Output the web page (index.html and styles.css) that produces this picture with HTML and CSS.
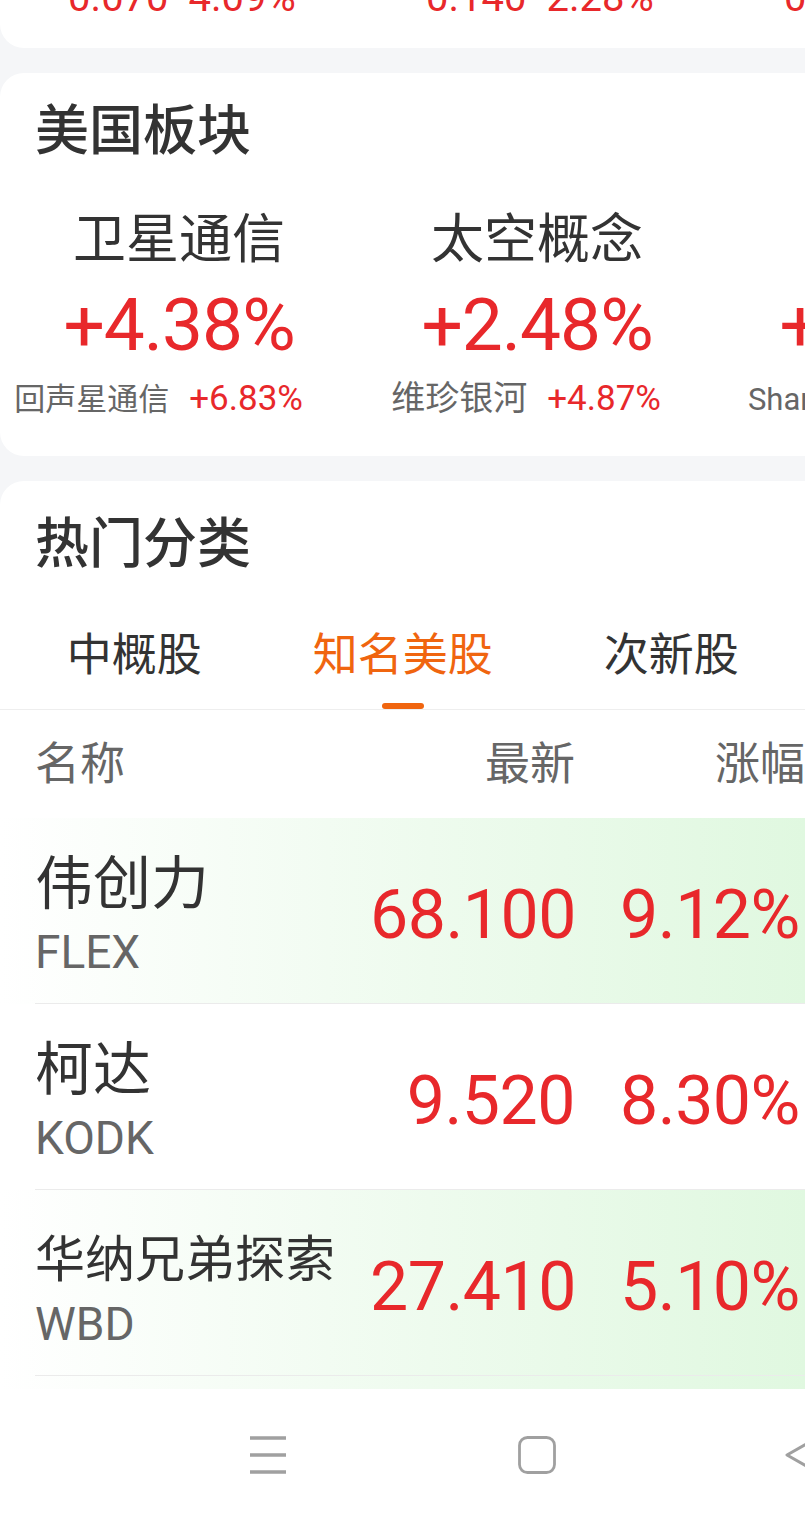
FILE: index.html
```html
<!DOCTYPE html>
<html lang="zh-CN">
<head>
    <meta charset="UTF-8">
    <meta name="viewport" content="width=device-width, initial-scale=1.0">
    <title>美股行情</title>
    <link rel="stylesheet" href="styles.css">
</head>
<body>
<div class="screen">
    <div class="scroll">
        <!-- index card, scrolled mostly out of view -->
        <section class="card top-card">
            <div class="quote-row">
                <div class="quote"><span>0.070</span><span>4.09%</span></div>
                <div class="quote"><span>0.140</span><span>2.28%</span></div>
                <div class="quote"><span>0.210</span><span>1.15%</span></div>
            </div>
        </section>

        <section class="card sector-card">
            <h2 class="card-title">美国板块</h2>
            <div class="sectors">
                <div class="sector">
                    <div class="sector-name">卫星通信</div>
                    <div class="sector-pct">+4.38%</div>
                    <div class="sector-lead"><span class="lead-name">回声星通信</span><span class="lead-pct">+6.83%</span></div>
                </div>
                <div class="sector">
                    <div class="sector-name">太空概念</div>
                    <div class="sector-pct">+2.48%</div>
                    <div class="sector-lead"><span class="lead-name short">维珍银河</span><span class="lead-pct">+4.87%</span></div>
                </div>
                <div class="sector">
                    <div class="sector-name">区块链</div>
                    <div class="sector-pct">+2.16%</div>
                    <div class="sector-lead"><span class="lead-name">SharpLink</span><span class="lead-pct">+9.02%</span></div>
                </div>
            </div>
        </section>

        <section class="card hot-card">
            <h2 class="card-title">热门分类</h2>
            <div class="tabs">
                <div class="tab">中概股<i class="tab-bar"></i></div>
                <div class="tab active">知名美股<i class="tab-bar"></i></div>
                <div class="tab">次新股<i class="tab-bar"></i></div>
                <div class="tab">明星股<i class="tab-bar"></i></div>
            </div>
            <div class="list-head">
                <div class="c-name">名称</div>
                <div class="c-price">最新</div>
                <div class="c-change">涨幅</div>
            </div>
            <div class="stock up">
                <div class="stock-body">
                    <div class="c-name">
                        <div class="stock-name">伟创力</div>
                        <div class="stock-code">FLEX</div>
                    </div>
                    <div class="c-price num">68.100</div>
                    <div class="c-change num">9.12%</div>
                </div>
            </div>
            <div class="stock">
                <div class="stock-body">
                    <div class="c-name">
                        <div class="stock-name">柯达</div>
                        <div class="stock-code">KODK</div>
                    </div>
                    <div class="c-price num">9.520</div>
                    <div class="c-change num">8.30%</div>
                </div>
            </div>
            <div class="stock up">
                <div class="stock-body">
                    <div class="c-name">
                        <div class="stock-name long">华纳兄弟探索</div>
                        <div class="stock-code">WBD</div>
                    </div>
                    <div class="c-price num">27.410</div>
                    <div class="c-change num">5.10%</div>
                </div>
            </div>
            <div class="stock up">
                <div class="stock-body">
                    <div class="c-name">
                        <div class="stock-name">美光科技</div>
                        <div class="stock-code">MU</div>
                    </div>
                    <div class="c-price num">98.270</div>
                    <div class="c-change num">4.66%</div>
                </div>
            </div>
        </section>
    </div>

    <nav class="nav-bar">
        <div class="nav-btn">
            <svg width="36" height="38" viewBox="0 0 36 38"><path d="M0 2h36M0 19h36M0 36h36" stroke="#a0a0a0" stroke-width="3.4"/></svg>
        </div>
        <div class="nav-btn">
            <svg width="38" height="38" viewBox="0 0 38 38"><rect x="1.5" y="1.5" width="35" height="35" rx="8" fill="none" stroke="#a0a0a0" stroke-width="2.8"/></svg>
        </div>
        <div class="nav-btn">
            <svg width="40" height="40" viewBox="0 0 40 40"><polyline points="30,4 2,20 30,36" fill="none" stroke="#a0a0a0" stroke-width="3" stroke-linejoin="round"/></svg>
        </div>
    </nav>
</div>
</body>
</html>
```

FILE: styles.css
```css
html, body {
    margin: 0;
    padding: 0;
}
body {
    width: 805px;
    height: 1520px;
    overflow: hidden;
    background: #f5f6f8;
    font-family: Roboto, "Noto Sans CJK SC", sans-serif;
    color: #333;
}
.screen {
    width: 1074px;
    height: 1520px;
    display: flex;
    flex-direction: column;
}
.scroll {
    height: 1389px;
    overflow: hidden;
}
.card {
    background: #fff;
    border-radius: 24px;
}
.card-title {
    margin: 0;
    padding-left: 35px;
    font-size: 54px;
    line-height: 1;
    font-weight: 500;
    color: #333;
}

/* top card */
.top-card {
    height: 48px;
    overflow: hidden;
    border-radius: 0 0 24px 24px;
}
.quote-row {
    display: flex;
    margin-top: -22px;
}
.quote {
    width: 358px;
    flex-shrink: 0;
    box-sizing: border-box;
    padding-left: 6px;
    display: flex;
    justify-content: center;
    gap: 20px;
    font-size: 40px;
    line-height: 1;
    color: #e8282b;
}

/* sectors */
.sector-card {
    margin-top: 25px;
    padding: 32px 0 40px;
}
.sectors {
    display: flex;
    margin-top: 55px;
}
.sector {
    width: 358px;
    flex-shrink: 0;
    display: flex;
    flex-direction: column;
    align-items: center;
}
.sector-name {
    font-size: 53px;
    line-height: 1;
    color: #333;
}
.sector-pct {
    margin-top: 22px;
    font-size: 73px;
    line-height: 1;
    letter-spacing: -1px;
    color: #e8282b;
}
.sector-lead {
    align-self: stretch;
    display: flex;
    justify-content: flex-end;
    align-items: baseline;
    gap: 20px;
    margin-top: 19px;
    padding-right: 55px;
    font-size: 32px;
    line-height: 1;
    white-space: nowrap;
}
.lead-name {
    font-size: 31px;
    color: #666;
}
.lead-name.short {
    font-size: 34px;
}
.lead-pct {
    font-size: 35px;
    color: #e8282b;
}

/* hot categories */
.hot-card {
    margin-top: 25px;
    padding-top: 37px;
    border-bottom-left-radius: 0;
    border-bottom-right-radius: 0;
}
.tabs {
    display: flex;
    margin-top: 61px;
    border-bottom: 1px solid #eeeeee;
}
.tab {
    width: 268.5px;
    flex-shrink: 0;
    display: flex;
    flex-direction: column;
    align-items: center;
    font-size: 45px;
    line-height: 1;
    color: #333;
}
.tab-bar {
    width: 42px;
    height: 6px;
    margin-top: 25px;
    border-radius: 3px;
}
.tab.active {
    color: #f0650f;
}
.tab.active .tab-bar {
    background: #f0650f;
}

.list-head,
.stock-body {
    display: flex;
    align-items: center;
}
.list-head {
    height: 108px;
    padding-left: 35px;
    font-size: 45px;
    line-height: 1;
    color: #666;
}
.c-name {
    width: 335px;
    flex-shrink: 0;
}
.c-price {
    width: 205px;
    flex-shrink: 0;
    text-align: right;
}
.c-change {
    width: 230px;
    flex-shrink: 0;
    box-sizing: border-box;
    padding-left: 45px;
}
.list-head .c-change {
    text-align: right;
}

.stock {
    padding-left: 35px;
}
.stock.up {
    background: linear-gradient(90deg, #ffffff 0%, #eefbee 40%, #d6f6d6 100%);
}
.stock-body {
    height: 186px;
    box-sizing: border-box;
    padding-top: 9px;
    border-bottom: 1px solid #ebebeb;
}
.stock-name {
    font-size: 58px;
    line-height: 1;
    color: #333;
    white-space: nowrap;
}
.stock-name.long {
    font-size: 50px;
    padding-top: 7px;
}
.stock-code {
    margin-top: 16px;
    font-size: 46px;
    line-height: 1;
    color: #666;
}
.num {
    font-size: 68px;
    line-height: 1;
    letter-spacing: -0.5px;
    color: #e8282b;
}

/* system nav */
.nav-bar {
    height: 131px;
    flex-shrink: 0;
    display: flex;
    padding: 0 134px;
    background: #fff;
}
.nav-btn {
    width: 268.5px;
    flex-shrink: 0;
    display: flex;
    align-items: center;
    justify-content: center;
}
```
